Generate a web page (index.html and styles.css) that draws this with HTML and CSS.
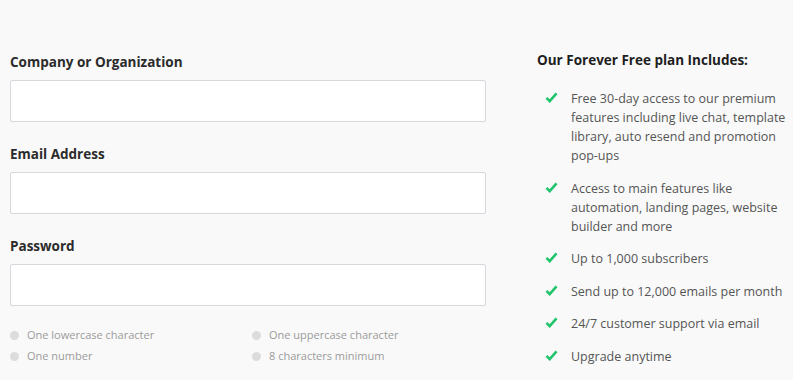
FILE: index.html
```html
<!DOCTYPE html>
<html lang="en">
<head>
    <meta charset="UTF-8">
    <title>Sign up</title>
    <link rel="stylesheet" href="styles.css">
</head>
<body>
    <div class="signup">
        <form class="signup-form">
            <div class="form-group">
                <label>Company or Organization</label>
                <input type="text" name="company">
            </div>

            <div class="form-group">
                <label>Email Address</label>
                <input type="text" name="email">
            </div>

            <div class="form-group form-group-last">
                <label>Password</label>
                <input type="password" name="password">
            </div>

            <ul class="pw-rules">
                <li>One lowercase character</li>
                <li>One uppercase character</li>
                <li>One number</li>
                <li>8 characters minimum</li>
            </ul>
        </form>

        <div class="plan">
            <h3>Our Forever Free plan Includes:</h3>
            <ul class="plan-list">
                <li><svg class="check" viewBox="0 0 14 12"><path d="M1.5 6.5 L5 10 L12.5 1.5" /></svg><span>Free 30-day access to our premium features including live chat, template library, auto resend and promotion pop-ups</span></li>
                <li><svg class="check" viewBox="0 0 14 12"><path d="M1.5 6.5 L5 10 L12.5 1.5" /></svg><span>Access to main features like automation, landing pages, website builder and more</span></li>
                <li><svg class="check" viewBox="0 0 14 12"><path d="M1.5 6.5 L5 10 L12.5 1.5" /></svg><span>Up to 1,000 subscribers</span></li>
                <li><svg class="check" viewBox="0 0 14 12"><path d="M1.5 6.5 L5 10 L12.5 1.5" /></svg><span>Send up to 12,000 emails per month</span></li>
                <li><svg class="check" viewBox="0 0 14 12"><path d="M1.5 6.5 L5 10 L12.5 1.5" /></svg><span>24/7 customer support via email</span></li>
                <li><svg class="check" viewBox="0 0 14 12"><path d="M1.5 6.5 L5 10 L12.5 1.5" /></svg><span>Upgrade anytime</span></li>
            </ul>
        </div>
    </div>
</body>
</html>
```

FILE: styles.css
```css
body {
    margin: 0;
    background: #f9f9f9;
    font-family: "Open Sans", "Liberation Sans", sans-serif;
    color: #333;
}

.signup {
    display: flex;
    padding-top: 52px;
}

.signup-form {
    width: 476px;
    margin-left: 10px;
}

.form-group {
    margin-bottom: 22px;
}

.form-group-last {
    margin-bottom: 19px;
}

.form-group label {
    display: block;
    font-size: 13.5px;
    font-weight: bold;
    line-height: 20px;
    margin-bottom: 8px;
    color: #2b2b2b;
}

.form-group input {
    display: block;
    box-sizing: border-box;
    width: 100%;
    height: 42px;
    border: 1px solid #d4d7dc;
    background: #fff;
    border-radius: 2px;
}

.pw-rules {
    list-style: none;
    margin: 0;
    padding: 0;
    display: grid;
    grid-template-columns: 242px 1fr;
    row-gap: 1px;
}

.pw-rules li {
    display: flex;
    align-items: center;
    font-size: 11px;
    line-height: 20px;
    color: #9b9b9b;
}

.pw-rules li::before {
    content: "";
    width: 9px;
    height: 9px;
    border-radius: 50%;
    background: #dcdcdc;
    margin-right: 8px;
}

.plan {
    margin-left: 51px;
}

.plan h3 {
    margin: -2px 0 19px;
    font-size: 13.5px;
    font-weight: bold;
    line-height: 20px;
    color: #1e1e1e;
}

.plan-list {
    list-style: none;
    margin: 0;
    padding: 0;
}

.plan-list li {
    display: flex;
    font-size: 12.5px;
    line-height: 19px;
    color: #555;
    margin-bottom: 13.5px;
}

.plan-list li span {
    width: 222px;
}

.check {
    flex: none;
    width: 13px;
    height: 11px;
    margin: 3px 13px 0 8px;
    fill: none;
    stroke: #1fc46b;
    stroke-width: 2.8;
}
```
